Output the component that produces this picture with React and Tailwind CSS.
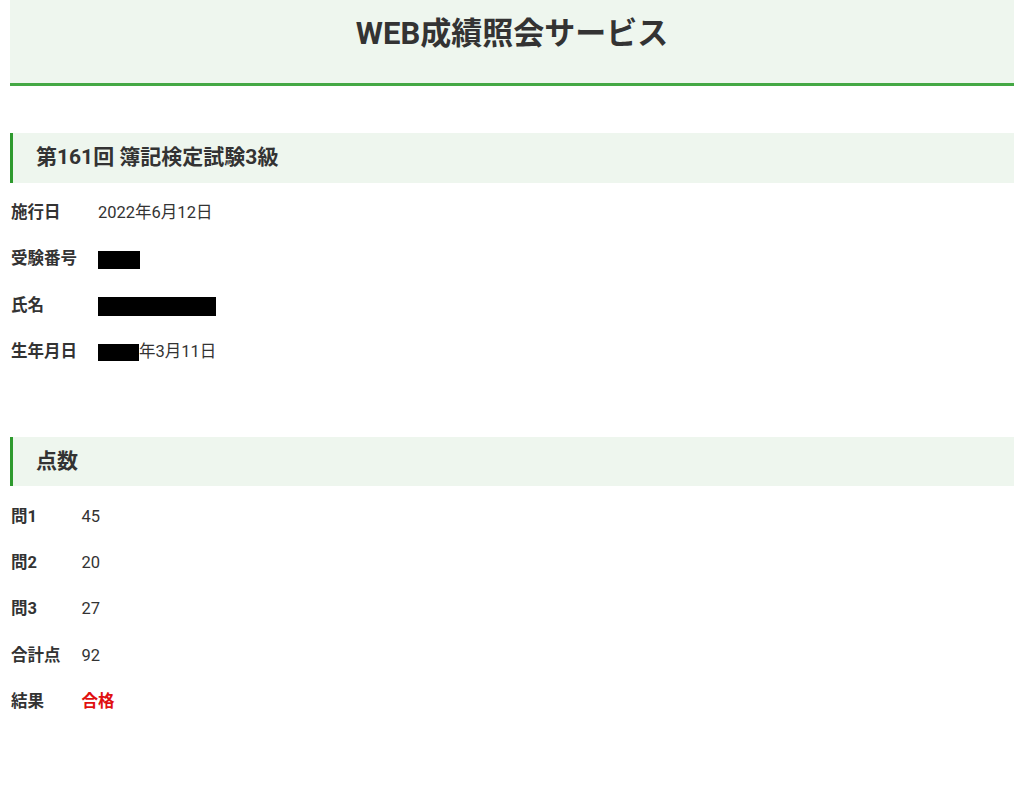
export default function App() {
  const info = [
    { label: "施行日", value: <span>2022年6月12日</span> },
    { label: "受験番号", value: <span className="inline-block w-[42px] h-[18px] bg-black align-middle" /> },
    { label: "氏名", value: <span className="inline-block w-[118px] h-[19px] bg-black align-middle" /> },
    {
      label: "生年月日",
      value: (
        <span className="flex items-center">
          <span className="inline-block w-[41px] h-[17px] bg-black" />
          <span>年3月11日</span>
        </span>
      ),
    },
  ];

  const scores = [
    { label: "問1", value: "45" },
    { label: "問2", value: "20" },
    { label: "問3", value: "27" },
    { label: "合計点", value: "92" },
    { label: "結果", value: "合格", pass: true },
  ];

  const font = { fontFamily: 'Roboto, "Noto Sans CJK JP", sans-serif' };

  return (
    <div className="min-h-[807px] bg-white text-[#333] px-[10px]" style={font}>
      {/* header */}
      <header className="h-[86px] bg-[#eef6ee] border-b-[3px] border-[#44a844] pt-[14px]">
        <h1 className="text-center text-[31px] leading-[40px] font-bold text-[#333]">
          WEB成績照会サービス
        </h1>
      </header>

      {/* exam info */}
      <section className="mt-[47px]">
        <h2 className="h-[50px] flex items-center bg-[#eef6ee] border-l-[3px] border-[#2e9a2e] pl-[23px] text-[21px] font-bold">
          第161回 簿記検定試験3級
        </h2>
        <div className="mt-[7px] grid grid-cols-[auto_1fr] gap-x-[21px] pl-[1px]">
          {info.map((row) => (
            <div key={row.label} className="contents">
              <div className="h-[46.5px] flex items-center text-[16.5px] font-bold">{row.label}</div>
              <div className="h-[46.5px] flex items-center text-[16.5px]">{row.value}</div>
            </div>
          ))}
        </div>
      </section>

      {/* scores */}
      <section className="mt-[61px]">
        <h2 className="h-[49px] flex items-center bg-[#eef6ee] border-l-[3px] border-[#2e9a2e] pl-[23px] text-[21px] font-bold">
          点数
        </h2>
        <div className="mt-[8px] grid grid-cols-[auto_1fr] gap-x-[21px] pl-[1px]">
          {scores.map((row) => (
            <div key={row.label} className="contents">
              <div className="h-[46.3px] flex items-center text-[16.5px] font-bold">{row.label}</div>
              <div
                className={
                  row.pass
                    ? "h-[46.3px] flex items-center text-[16.5px] font-bold text-[#e01010]"
                    : "h-[46.3px] flex items-center text-[16.5px]"
                }
              >
                {row.value}
              </div>
            </div>
          ))}
        </div>
      </section>
    </div>
  );
}
